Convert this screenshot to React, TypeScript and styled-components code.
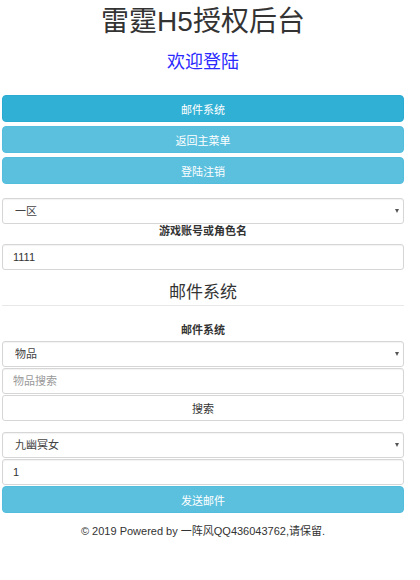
import React from "react";
import styled, { createGlobalStyle } from "styled-components";

const Global = createGlobalStyle`
  html, body { margin: 0; padding: 0; background: #fff; }
  body { font-family: "Liberation Sans", "Noto Sans CJK SC", sans-serif; color: #333; }
  * { box-sizing: border-box; }
`;

const Page = styled.div`
  width: 402px;
  margin-left: 2px;
  display: flex;
  flex-direction: column;
`;

const Title = styled.h1`
  margin: 6px 0 0;
  font-size: 28px;
  line-height: 32px;
  font-weight: 400;
  text-align: center;
  color: #333;
`;

const Welcome = styled.h3`
  margin: 12px 0 0;
  font-size: 18px;
  line-height: 24px;
  font-weight: 400;
  text-align: center;
  color: #2a2aff;
`;

const Menu = styled.div`
  margin-top: 21px;
  display: flex;
  flex-direction: column;
  gap: 4px;
`;

const InfoButton = styled.button<{ $active?: boolean }>`
  height: 27px;
  width: 100%;
  border: 1px solid ${(p) => (p.$active ? "#2aabd2" : "#53bddd")};
  border-radius: 4px;
  background: ${(p) => (p.$active ? "#31b0d5" : "#5bc0de")};
  color: #fff;
  font-family: inherit;
  font-size: 11px;
  padding: 0;
  cursor: pointer;
`;

const PlainButton = styled.button`
  height: 26px;
  width: 100%;
  border: 1px solid #d6d6d6;
  border-radius: 3px;
  background: #fff;
  color: #333;
  font-family: inherit;
  font-size: 11px;
  padding: 0;
`;

const SelectWrap = styled.div<{ $mt: number }>`
  position: relative;
  margin-top: ${(p) => p.$mt}px;
  &::after {
    content: "";
    position: absolute;
    right: 5px;
    top: 11px;
    border-left: 2.5px solid transparent;
    border-right: 2.5px solid transparent;
    border-top: 4px solid #555;
    pointer-events: none;
  }
`;

const Select = styled.select`
  appearance: none;
  -webkit-appearance: none;
  display: block;
  width: 100%;
  height: 26px;
  border: 1px solid #d6d6d6;
  border-radius: 3px;
  box-shadow: inset 0 1px 1px rgba(0, 0, 0, 0.05);
  background: #fff;
  padding: 0 12px;
  font-family: inherit;
  font-size: 11px;
  color: #444;
  outline: none;
`;

const Input = styled.input<{ $mt: number }>`
  display: block;
  width: 100%;
  height: 26px;
  margin-top: ${(p) => p.$mt}px;
  border: 1px solid #d6d6d6;
  border-radius: 3px;
  box-shadow: inset 0 1px 1px rgba(0, 0, 0, 0.05);
  background: #fff;
  padding: 0 10px;
  font-family: inherit;
  font-size: 11px;
  color: #333;
  outline: none;
  &::placeholder { color: #999; }
`;

const Label = styled.div<{ $mt: number }>`
  margin-top: ${(p) => p.$mt}px;
  font-size: 11px;
  line-height: 14px;
  font-weight: 700;
  text-align: center;
  color: #333;
`;

const SectionTitle = styled.h4`
  margin: 12px 0 0;
  font-size: 17px;
  line-height: 22px;
  font-weight: 400;
  text-align: center;
  color: #333;
  padding-bottom: 1px;
  border-bottom: 1px solid #e8e8e8;
`;

const Stack = styled.div<{ $mt: number }>`
  margin-top: ${(p) => p.$mt}px;
  display: flex;
  flex-direction: column;
  gap: 1px;
`;

const Footer = styled.footer`
  margin-top: 11px;
  font-size: 11px;
  line-height: 14px;
  text-align: center;
  color: #333;
`;

export default function App() {
  return (
    <>
      <Global />
      <Page>
        <Title>雷霆H5授权后台</Title>
        <Welcome>欢迎登陆</Welcome>
        <Menu>
          <InfoButton $active>邮件系统</InfoButton>
          <InfoButton>返回主菜单</InfoButton>
          <InfoButton>登陆注销</InfoButton>
        </Menu>
        <SelectWrap $mt={14}>
          <Select defaultValue="1">
            <option value="1">一区</option>
          </Select>
        </SelectWrap>
        <Label $mt={0}>游戏账号或角色名</Label>
        <Input $mt={6} defaultValue="1111" />
        <SectionTitle>邮件系统</SectionTitle>
        <Label $mt={17}>邮件系统</Label>
        <Stack $mt={4}>
          <SelectWrap $mt={0}>
            <Select defaultValue="物品">
              <option>物品</option>
            </Select>
          </SelectWrap>
          <Input $mt={0} placeholder="物品搜索" />
          <PlainButton>搜索</PlainButton>
        </Stack>
        <Stack $mt={11}>
          <SelectWrap $mt={0}>
            <Select defaultValue="九幽冥女">
              <option>九幽冥女</option>
            </Select>
          </SelectWrap>
          <Input $mt={0} defaultValue="1" />
          <InfoButton>发送邮件</InfoButton>
        </Stack>
        <Footer>© 2019 Powered by 一阵风QQ436043762,请保留.</Footer>
      </Page>
    </>
  );
}
